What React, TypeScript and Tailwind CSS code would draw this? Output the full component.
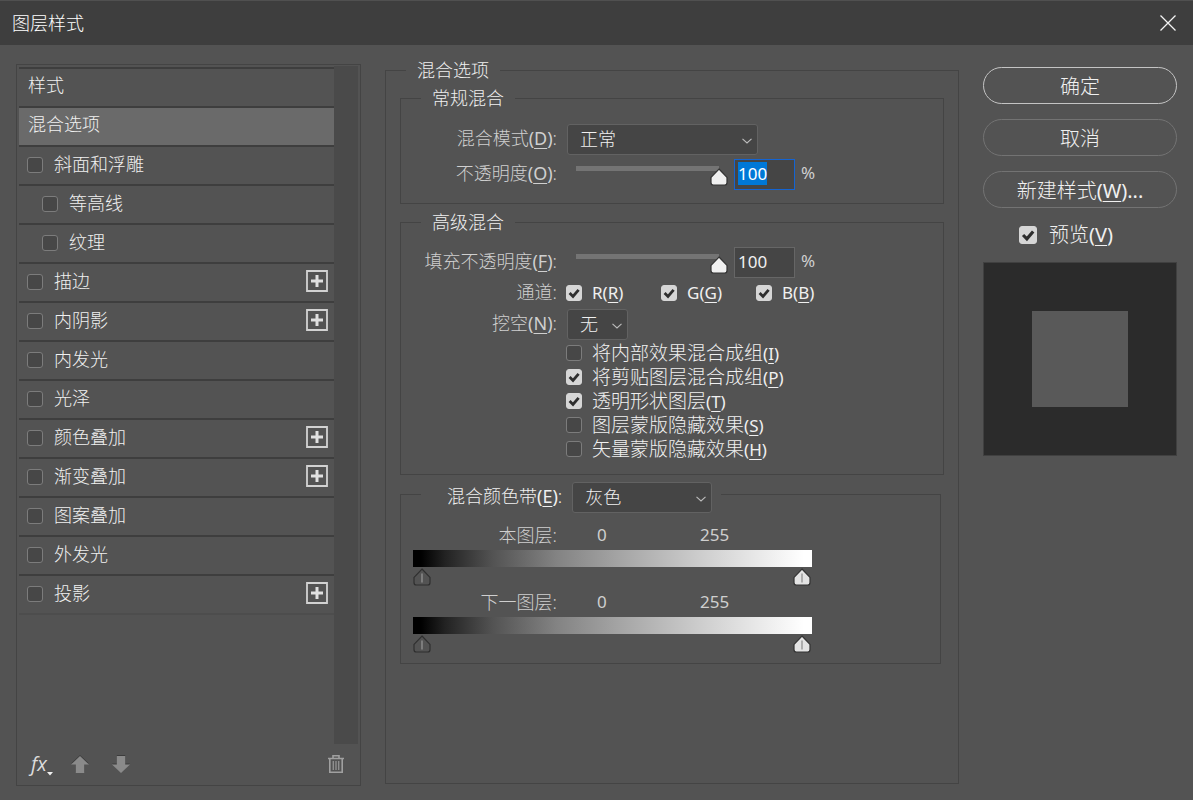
import React, { useEffect, useRef, useState } from "react";
import clsx from "clsx";

interface StyleRow {
  name: string;
  sub?: boolean;
  plus?: boolean;
}

const effects: StyleRow[] = [
  { name: "斜面和浮雕" },
  { name: "等高线", sub: true },
  { name: "纹理", sub: true },
  { name: "描边", plus: true },
  { name: "内阴影", plus: true },
  { name: "内发光" },
  { name: "光泽" },
  { name: "颜色叠加", plus: true },
  { name: "渐变叠加", plus: true },
  { name: "图案叠加" },
  { name: "外发光" },
  { name: "投影", plus: true },
];

const advancedOptions = [
  { text: "将内部效果混合成组", accel: "I", checked: false },
  { text: "将剪贴图层混合成组", accel: "P", checked: true },
  { text: "透明形状图层", accel: "T", checked: true },
  { text: "图层蒙版隐藏效果", accel: "S", checked: false },
  { text: "矢量蒙版隐藏效果", accel: "H", checked: false },
];

// underlined accelerator key in brackets
const Accel = ({ k }: { k: string }) => (
  <span className="font-normal">
    (<u className="decoration-1 underline-offset-3">{k}</u>)
  </span>
);

const CheckBox = ({ id, defaultChecked, large }: { id: string; defaultChecked?: boolean; large?: boolean }) => (
  <span className={clsx("relative block shrink-0", large ? "size-[18px]" : "size-4")}>
    <input
      id={id}
      type="checkbox"
      defaultChecked={defaultChecked}
      className="peer block size-full appearance-none rounded-[3px] border border-[#7c7c7c] bg-[#474747] checked:border-[#d6d6d6] checked:bg-[#d6d6d6]"
    />
    <svg viewBox="0 0 16 16" className="pointer-events-none absolute inset-0 hidden size-full peer-checked:block">
      <path d="M3.6 8 7 11.4 12.6 4.8" fill="none" stroke="#2e2e2e" strokeWidth="2.8" />
    </svg>
  </span>
);

const Dropdown = ({ id, options, className }: { id: string; options: string[]; className: string }) => (
  <span className={clsx("relative block", className)}>
    <select
      id={id}
      className="block h-[31px] w-full appearance-none rounded-[3px] border border-[#626262] bg-[#454545] pb-0.5 pl-3 text-lg leading-6 text-[#f0f0f0] outline-none"
    >
      {options.map((o) => (
        <option key={o}>{o}</option>
      ))}
    </select>
    <svg viewBox="0 0 10 6" className="pointer-events-none absolute top-[14px] right-1.5 h-1.5 w-2.5">
      <path d="M.5 .8 5 5 9.5 .8" fill="none" stroke="#bdbdbd" strokeWidth="1.1" />
    </svg>
  </span>
);

const Thumb = ({ fill, stroke = "#333", tick }: { fill: string; stroke?: string; tick?: string }) => (
  <svg viewBox="0 0 18 18" className="pointer-events-none block size-[18px]">
    <path d="M9 1 17 9.4V14.4Q17 17 14.6 17H3.4Q1 17 1 14.4V9.4Z" fill={fill} stroke={stroke} strokeWidth="1.2" />
    {tick && <path d="M9 5.5V14.5" stroke={tick} strokeWidth="1.2" />}
  </svg>
);

const OpacityRow = ({ id, text, accel, active }: { id: string; text: string; accel: string; active?: boolean }) => {
  const [value, setValue] = useState("100");
  const field = useRef<HTMLInputElement>(null);

  useEffect(() => {
    if (active && field.current) {
      field.current.focus();
      field.current.select();
    }
  }, [active]);

  return (
    <>
      <label htmlFor={id} className="text-right">
        {text}
        <Accel k={accel} />:
      </label>
      <div className="flex">
        <div className="relative mt-[7px] ml-[10px] h-5 w-[143px]">
          <div className="h-[5px] bg-[#747474]" />
          <div className="absolute top-0.5 -translate-x-1/2" style={{ left: `${Number(value) || 0}%` }}>
            <Thumb fill="#f0f0f0" />
          </div>
          <input
            type="range"
            min={0}
            max={100}
            value={Number(value) || 0}
            onChange={(e) => setValue(e.target.value)}
            aria-label={text}
            className="absolute inset-0 size-full opacity-0"
          />
        </div>
        <input
          id={id}
          ref={field}
          type="text"
          value={value}
          onChange={(e) => setValue(e.target.value)}
          className="ml-[15px] h-[31px] w-[61px] border border-[#666] bg-[#454545] px-[3px] pb-0.5 text-[17px] leading-5 font-normal text-[#f0f0f0] outline-none selection:bg-[#0078d7] selection:text-white focus:border-[#1464d2]"
        />
        <span className="ml-1.5 text-[17px] font-normal">%</span>
      </div>
    </>
  );
};

const GroupLegend = ({ className = "ml-5", children }: { className?: string; children: React.ReactNode }) => (
  <legend className={clsx("h-6 px-[11px] text-lg leading-6 text-[#f0f0f0]", className)}>{children}</legend>
);

const BlendStrip = ({ label }: { label: string }) => (
  <div className="h-[67px]">
    <div className="flex h-6 font-normal">
      <span className="w-36 text-right text-lg leading-6 font-light">{label}:</span>
      <span className="ml-10 w-[103px]">0</span>
      <span>255</span>
    </div>
    <div className="mt-[3px] h-[17px] bg-[linear-gradient(to_right,#000_2%,#222_8%,#535353_20%,#838383_36%,#a3a3a3_51%,#cfcfcf_73%,#fff_98%)]" />
    <div className="mt-px flex justify-between pr-px">
      <Thumb fill="#535353" stroke="#2f2f2f" tick="#999" />
      <Thumb fill="#e4e4e4" tick="#8a8a8a" />
    </div>
  </div>
);

const Sidebar = () => (
  <aside className="mt-[19px] flex w-[345px] shrink-0 flex-col border border-[#444]">
    <div className="flex flex-1 pt-px pr-0.5 pl-0.5">
      <ul className="flex-1 pt-px text-lg leading-6 text-[#f0f0f0]">
        <li className="flex h-[39px] items-center border-t-2 border-[#3e3e3e] pb-1.5 pl-[9px]">样式</li>
        <li className="flex h-[39px] items-center border-t-2 border-[#3e3e3e] bg-[#6a6a6a] pb-1.5 pl-[9px]">混合选项</li>
        {effects.map((row, i) => (
          <li
            key={row.name}
            className={clsx("flex h-[39px] items-center border-t-2 border-[#3e3e3e] pr-1.5 pb-[3px]", row.sub ? "pl-[23px]" : "pl-2")}
          >
            <span className="pt-0.5">
              <CheckBox id={`fx-${i}`} />
            </span>
            <label htmlFor={`fx-${i}`} className="ml-[11px] flex-1 pb-px">
              {row.name}
            </label>
            {row.plus && (
              <button aria-label={`添加${row.name}`} className="block size-[22px]">
                <svg viewBox="0 0 22 22" className="size-full">
                  <path d="M1 1H21V21H1Z" fill="none" stroke="#d2d2d2" strokeWidth="1.8" />
                  <path d="M11 5V17M5 11H17" stroke="#e0e0e0" strokeWidth="3" />
                </svg>
              </button>
            )}
          </li>
        ))}
        <li className="border-t-2 border-[#4d4d4d]" />
      </ul>
      <div className="w-6 bg-[#4a4a4a]" />
    </div>
    <div className="flex h-[41px] items-center pr-4 pb-0.5 pl-[14px]">
      <button aria-label="效果" className="flex w-6 items-end">
        <span className="font-['Open_Sans'] text-xl leading-6 font-normal text-[#dcdcdc] italic">fx</span>
        <svg viewBox="0 0 6 4" className="h-1 w-1.5 shrink-0">
          <path d="M0 0H6L3 3.5Z" fill="#f0f0f0" />
        </svg>
      </button>
      <button aria-label="上移" className="ml-4">
        <svg viewBox="0 0 18 18" className="size-[18px]">
          <path d="M9 0 18 8.6H13.2V17H4.8V8.6H0Z" fill="#3c3c3c" />
          <path d="M9 1 18 9.6H13.2V18H4.8V9.6H0Z" fill="#8a8a8a" />
        </svg>
      </button>
      <button aria-label="下移" className="ml-[23px]">
        <svg viewBox="0 0 18 18" className="size-[18px]">
          <path d="M4.8 0H13.2V8.4H18L9 17 0 8.4H4.8Z" fill="#3c3c3c" />
          <path d="M4.8 1H13.2V9.4H18L9 18 0 9.4H4.8Z" fill="#8a8a8a" />
        </svg>
      </button>
      <button aria-label="删除" className="ml-auto">
        <svg viewBox="0 0 16 18" className="h-[18px] w-4">
          <path d="M0 3.5H16M5 3V.8H11V3M1.8 4V17.2H14.2V4" fill="none" stroke="#a0a0a0" strokeWidth="1.6" />
          <path d="M5.3 6V15M8 6V15M10.7 6V15" stroke="#8f8f8f" strokeWidth="1.4" />
        </svg>
      </button>
    </div>
  </aside>
);

const BlendOptions = () => (
  <fieldset className="mt-[13px] mb-0.5 min-w-0 flex-1 border border-[#444] px-[14px]">
    <GroupLegend className="ml-1.5">混合选项</GroupLegend>

    <fieldset className="mt-1 min-w-0 border border-[#444] pb-[13px]">
      <GroupLegend>常规混合</GroupLegend>
      <div className="mt-[14px] grid grid-cols-[156px_1fr] gap-x-[9px] gap-y-1 leading-7">
        <label htmlFor="mode" className="text-right">
          混合模式
          <Accel k="D" />:
        </label>
        <Dropdown id="mode" options={["正常", "溶解", "正片叠底", "滤色"]} className="ml-px w-[191px]" />
        <OpacityRow id="opacity" text="不透明度" accel="O" active />
      </div>
    </fieldset>

    <fieldset className="mt-1.5 min-w-0 border border-[#444] pb-[13px]">
      <GroupLegend>高级混合</GroupLegend>
      <div className="mt-[13px] grid grid-cols-[156px_1fr] gap-x-[9px] leading-7">
        <OpacityRow id="fill" text="填充不透明度" accel="F" />
        <span className="text-right">通道:</span>
        <div className="mb-0.5 flex h-[29px] text-[17px] font-normal text-[#f0f0f0]">
          {["R", "G", "B"].map((c) => (
            <div key={c} className="flex w-[95px] items-center gap-[10px]">
              <CheckBox id={`channel-${c}`} defaultChecked />
              <label htmlFor={`channel-${c}`}>
                {c}
                <Accel k={c} />
              </label>
            </div>
          ))}
        </div>
        <label htmlFor="knockout" className="text-right">
          挖空
          <Accel k="N" />:
        </label>
        <Dropdown id="knockout" options={["无", "浅", "深"]} className="ml-px w-[61px]" />
      </div>
      <div className="ml-[165px] pt-px text-[19px] leading-6 text-[#f0f0f0]">
        {advancedOptions.map((o) => (
          <div key={o.accel} className="flex h-6 items-center gap-[10px]">
            <CheckBox id={`adv-${o.accel}`} defaultChecked={o.checked} />
            <label htmlFor={`adv-${o.accel}`}>
              {o.text}
              <span className="text-[17px]">
                <Accel k={o.accel} />
              </span>
            </label>
          </div>
        ))}
      </div>
    </fieldset>

    <fieldset className="mt-[7px] mr-[3px] min-w-0 border border-[#444] px-3 pb-1.5">
      <legend className="ml-2 h-[25px] pr-[9px] pl-[26px]">
        <div className="flex gap-[10px] leading-7 text-[#f0f0f0]">
          <label htmlFor="blendif">
            混合颜色带
            <Accel k="E" />:
          </label>
          <Dropdown id="blendif" options={["灰色", "红", "绿", "蓝"]} className="w-[140px]" />
        </div>
      </legend>
      <div className="mt-4 w-[399px] text-[17px] leading-6">
        <BlendStrip label="本图层" />
        <BlendStrip label="下一图层" />
      </div>
    </fieldset>
  </fieldset>
);

const pill = "h-[37px] rounded-full border pt-0.5 text-xl leading-6 text-[#f0f0f0]";

const Actions = () => (
  <div className="mt-[22px] flex w-[194px] shrink-0 flex-col gap-[15px]">
    <button className={clsx(pill, "border-[#c4c4c4]")}>确定</button>
    <button className={clsx(pill, "border-[#737373]")}>取消</button>
    <button className={clsx(pill, "border-[#737373]")}>
      新建样式
      <Accel k="W" />
      <span className="font-normal">...</span>
    </button>
    <div className="flex h-6 items-center gap-3 pl-9 text-xl leading-6 text-[#f0f0f0]">
      <CheckBox id="preview" defaultChecked large />
      <label htmlFor="preview">
        预览
        <Accel k="V" />
      </label>
    </div>
    <div className="flex h-[194px] items-center justify-center border border-[#404040] bg-[#2b2b2b]">
      <div className="size-24 bg-[#595959]" />
    </div>
  </div>
);

export default function App() {
  return (
    <div className="flex min-h-screen flex-col border-t border-[#505050] bg-[#535353] font-['Noto_Sans','Noto_Sans_CJK_SC',sans-serif] text-lg font-light text-[#cfcfcf]">
      <header className="flex h-11 items-center justify-between bg-[#3e3e3e] pr-[17px] pl-3">
        <h1 className="text-lg leading-6 text-white">图层样式</h1>
        <button aria-label="关闭">
          <svg viewBox="0 0 16 16" className="size-4">
            <path d="M.5 .5 15.5 15.5M15.5 .5 .5 15.5" stroke="#f4f4f4" strokeWidth="1.3" />
          </svg>
        </button>
      </header>
      <main className="flex flex-1 gap-6 px-4 pb-[14px]">
        <Sidebar />
        <BlendOptions />
        <Actions />
      </main>
    </div>
  );
}
